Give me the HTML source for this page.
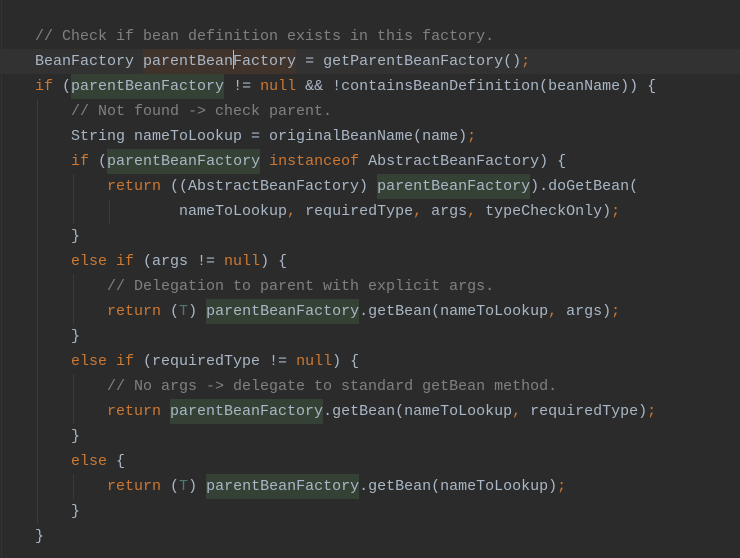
<!DOCTYPE html>
<html><head><style>
html,body{margin:0;padding:0;background:#2b2b2b;width:740px;height:558px;overflow:hidden}
.ed{position:absolute;left:0;top:24px;width:740px;font-family:"Liberation Mono",monospace;font-size:15px;color:#a9b7c6}
.l{height:25px;line-height:25px;white-space:pre;padding-left:35px;position:relative}
.cur{background:#323232}
.k{color:#cc7832}.c{color:#808080}.t{color:#507874}
.r{background:#344134;display:inline-block;height:25px}
.w{background:#40332b;display:inline-block;height:25px}
.g{position:absolute;width:1px;background:#3b3b3b}
.caret{display:inline-block;width:1px;height:19px;background:#bbbbbb;vertical-align:-4px;margin-right:-1px}
</style></head><body>
<div style="position:absolute;left:1px;top:0;width:1px;height:558px;background:#333"></div>
<div class="g" style="left:37px;top:99px;height:425px"></div>
<div class="g" style="left:73px;top:174px;height:50px"></div>
<div class="g" style="left:109px;top:199px;height:25px"></div>
<div class="g" style="left:73px;top:274px;height:50px"></div>
<div class="g" style="left:73px;top:374px;height:50px"></div>
<div class="g" style="left:73px;top:474px;height:25px"></div>
<div class="ed">
<div class="l"><span class="c">// Check if bean definition exists in this factory.</span></div>
<div class="l cur">BeanFactory <span class="w">parentBean<span class="caret"></span>Factory</span> = getParentBeanFactory()<span class="k">;</span></div>
<div class="l"><span class="k">if </span>(<span class="r">parentBeanFactory</span> != <span class="k">null </span>&amp;&amp; !containsBeanDefinition(beanName)) {</div>
<div class="l">    <span class="c">// Not found -&gt; check parent.</span></div>
<div class="l">    String nameToLookup = originalBeanName(name)<span class="k">;</span></div>
<div class="l">    <span class="k">if </span>(<span class="r">parentBeanFactory</span> <span class="k">instanceof </span>AbstractBeanFactory) {</div>
<div class="l">        <span class="k">return </span>((AbstractBeanFactory) <span class="r">parentBeanFactory</span>).doGetBean(</div>
<div class="l">                nameToLookup<span class="k">, </span>requiredType<span class="k">, </span>args<span class="k">, </span>typeCheckOnly)<span class="k">;</span></div>
<div class="l">    }</div>
<div class="l">    <span class="k">else if </span>(args != <span class="k">null</span>) {</div>
<div class="l">        <span class="c">// Delegation to parent with explicit args.</span></div>
<div class="l">        <span class="k">return </span>(<span class="t">T</span>) <span class="r">parentBeanFactory</span>.getBean(nameToLookup<span class="k">, </span>args)<span class="k">;</span></div>
<div class="l">    }</div>
<div class="l">    <span class="k">else if </span>(requiredType != <span class="k">null</span>) {</div>
<div class="l">        <span class="c">// No args -&gt; delegate to standard getBean method.</span></div>
<div class="l">        <span class="k">return </span><span class="r">parentBeanFactory</span>.getBean(nameToLookup<span class="k">, </span>requiredType)<span class="k">;</span></div>
<div class="l">    }</div>
<div class="l">    <span class="k">else </span>{</div>
<div class="l">        <span class="k">return </span>(<span class="t">T</span>) <span class="r">parentBeanFactory</span>.getBean(nameToLookup)<span class="k">;</span></div>
<div class="l">    }</div>
<div class="l">}</div>
</div>
</body></html>
